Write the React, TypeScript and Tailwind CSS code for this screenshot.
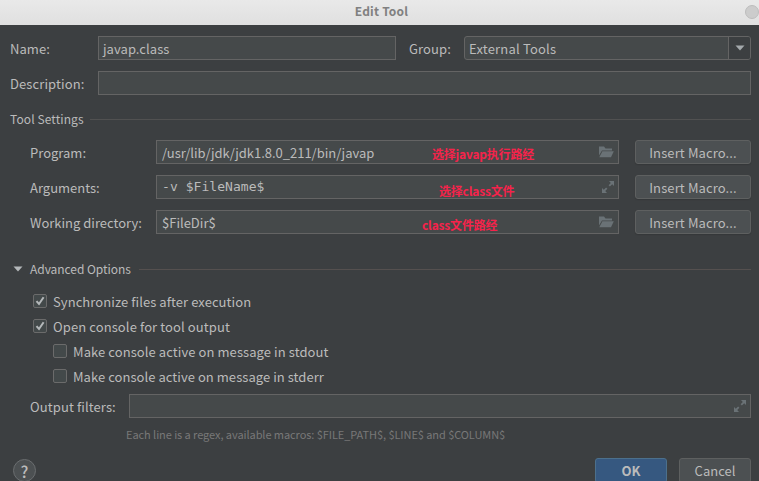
import React from "react";

const field = "h-6 border border-[#646464] bg-[#45494a] flex items-center";

function Folder() {
  return (
    <svg width="16" height="12" viewBox="0 0 16 12" className="mr-1 shrink-0" fill="#6a7276">
      <path d="M1 0.5h5l1.5 2H14v2H4L1 9.5z" />
      <path d="M4.4 5.2H15.8L13 11.3H1.3z" />
    </svg>
  );
}

function Expand() {
  return (
    <svg width="12" height="12" viewBox="0 0 12 12" className="mr-1 shrink-0" fill="#6a7276">
      <path d="M7 0h5v5l-1.8-1.8L7.9 5.5 6.6 4.2 8.8 2z" />
      <path d="M0 7l1.8 1.8L4.1 6.5l1.3 1.3L3.2 10 5 12H0z" />
    </svg>
  );
}

function MacroButton() {
  return (
    <button className="ml-4 flex h-6 w-[116px] shrink-0 items-center justify-center rounded-[3px] border border-[#5e6060] bg-[#4c5052] shadow-[0_1px_1px_#35383a]">
      <span className="pt-[2px] tracking-[0.12px]">Insert Macro...</span>
    </button>
  );
}

type SettingProps = {
  label: React.ReactNode;
  value: React.ReactNode;
  note: React.ReactNode;
  icon: React.ReactNode;
};

function Setting({ label, value, note, icon }: SettingProps) {
  return (
    <div className="flex h-6 items-center">
      <div className="w-[126px] shrink-0 pt-[2px]">{label}</div>
      <div className={`${field} relative w-[463px] shrink-0 justify-between pl-[5px]`}>
        {value}
        {note}
        {icon}
      </div>
      <MacroButton />
    </div>
  );
}

function Check({ checked, children }: { checked?: boolean; children: React.ReactNode }) {
  return (
    <div className="flex h-[25px] items-center">
      <span className="mr-[6px] mb-px flex h-[14px] w-[14px] items-center justify-center rounded-[2px] border border-[#6b6b6b] bg-[#43494a]">
        {checked && (
          <svg width="10" height="10" viewBox="0 0 10 10" fill="none" stroke="#b4b8ba" strokeWidth="2">
            <path d="M1.5 5.2L4 8L8.6 1.2" />
          </svg>
        )}
      </span>
      {children}
    </div>
  );
}

export default function App() {
  return (
    <div className="h-[481px] w-[759px] overflow-hidden bg-[#3c3f41] font-['Noto_Sans_CJK_SC',sans-serif] text-[13px] leading-6 whitespace-nowrap text-[#bbbbbb]">
      <header className="relative flex h-[25px] items-center justify-center bg-linear-to-b from-[#e9e9e9] to-[#e0e0e0] text-[12px] font-bold text-[#808080]">
        <span className="mr-[-4px] mb-[3px] tracking-[0.2px]">Edit Tool</span>
        <span className="absolute top-[5px] left-[745px] h-[14px] w-[14px] rounded-full border border-[#bdbdbd] bg-[#cccccc]" />
      </header>

      <main className="pr-2 pl-[10px]">
        <div className="mt-[11px] flex h-6 items-center">
          <div className="w-[88px] pt-[2px] tracking-[0.05px]">Name:</div>
          <div className={`${field} w-[298px] pl-[4px]`}><span className="pt-[2px] tracking-[0.05px]">javap.class</span></div>
          <div className="ml-[13px] w-[55px] pt-[2px] tracking-[0.1px]">Group:</div>
          <div className={`${field} w-[287px] rounded-[3px] pl-[4px]`}>
            <span className="grow pt-[2px] tracking-[0.2px]">External Tools</span>
            <span className="flex h-full w-[22px] items-center justify-center rounded-r-[2px] border-l border-[#646464] bg-[#3c3f41]">
              <svg width="10" height="6" viewBox="0 0 10 6" fill="#a4a9ac"><path d="M0.5 0.5h9L5 5.5z" /></svg>
            </span>
          </div>
        </div>

        <div className="mt-[11px] flex h-6 items-center">
          <div className="w-[88px] pt-[2px] tracking-[0.1px]">Description:</div>
          <div className={`${field} w-[653px]`} />
        </div>

        <div className="mt-3 flex h-6 items-center text-[12px]">
          <span className="mr-[6px] tracking-[0.1px]">Tool Settings</span>
          <span className="h-px grow bg-[#515151]" />
        </div>

        <section className="mt-[9px] flex flex-col gap-[11px] pl-5">
          <Setting
            label="Program:"
            value={<span className="pt-[2px] tracking-[-0.02px]">/usr/lib/jdk/jdk1.8.0_211/bin/javap</span>}
            note={<span className="absolute top-px left-[275px] text-[12px] font-bold tracking-[-0.2px] text-[#f5234b]">选择javap执行路经</span>}
            icon={<Folder />}
          />
          <Setting
            label="Arguments:"
            value={<span className="font-['DejaVu_Sans_Mono',monospace] text-[13px] tracking-[0.05px]">-v $FileName$</span>}
            note={<span className="absolute top-[3px] left-[282px] text-[12px] font-bold tracking-[-0.2px] text-[#f5234b]">选择class文件</span>}
            icon={<Expand />}
          />
          <Setting
            label="Working directory:"
            value={<span className="pt-[2px]">$FileDir$</span>}
            note={<span className="absolute top-[2px] left-[265px] text-[12px] font-bold tracking-[-0.2px] text-[#f5234b]">class文件路经</span>}
            icon={<Folder />}
          />
        </section>

        <div className="mt-[23px] flex h-6 items-center pl-[3px] text-[12px]">
          <svg width="10" height="6" viewBox="0 0 10 6" fill="#b4b8ba" className="mr-[7px]"><path d="M0.5 0.5h9L5 5.5z" /></svg>
          <span className="mr-2 tracking-[-0.05px]">Advanced Options</span>
          <span className="mt-px h-px grow bg-[#55504f]" />
        </div>

        <section className="mt-2 pl-[23px]">
          <Check checked><span className="tracking-[0.07px]">Synchronize files after execution</span></Check>
          <Check checked><span className="tracking-[0.1px]">Open console for tool output</span></Check>
          <div className="pl-5">
            <Check><span className="tracking-[0.08px]">Make console active on message in stdout</span></Check>
            <Check><span className="tracking-[0.05px]">Make console active on message in stderr</span></Check>
          </div>
        </section>

        <div className="mt-[5px] flex h-6 items-center pl-5">
          <div className="w-[99px] pt-[2px] tracking-[0.1px]">Output filters:</div>
          <div className={`${field} w-[622px] justify-end`}><Expand /></div>
        </div>
        <p className="mt-[4px] ml-[116px] h-6 text-[11px] tracking-[-0.07px] text-[#787878]">Each line is a regex, available macros: $FILE_PATH$, $LINE$ and $COLUMN$</p>

        <footer className="mt-[12px] flex items-start pl-[3px]">
          <button className="mt-px flex h-[23px] w-[23px] items-center justify-center rounded-full border border-[#6a6d6f] bg-[#4c5052] text-[16px] font-medium">?</button>
          <button className="ml-auto flex h-[25px] w-[72px] items-center justify-center rounded-[3px] border border-[#4c708c] bg-[#365880] font-bold">OK</button>
          <button className="ml-3 flex h-[25px] w-[72px] items-center justify-center rounded-[3px] border border-[#5e6060] bg-[#4c5052]">Cancel</button>
        </footer>
      </main>
    </div>
  );
}
